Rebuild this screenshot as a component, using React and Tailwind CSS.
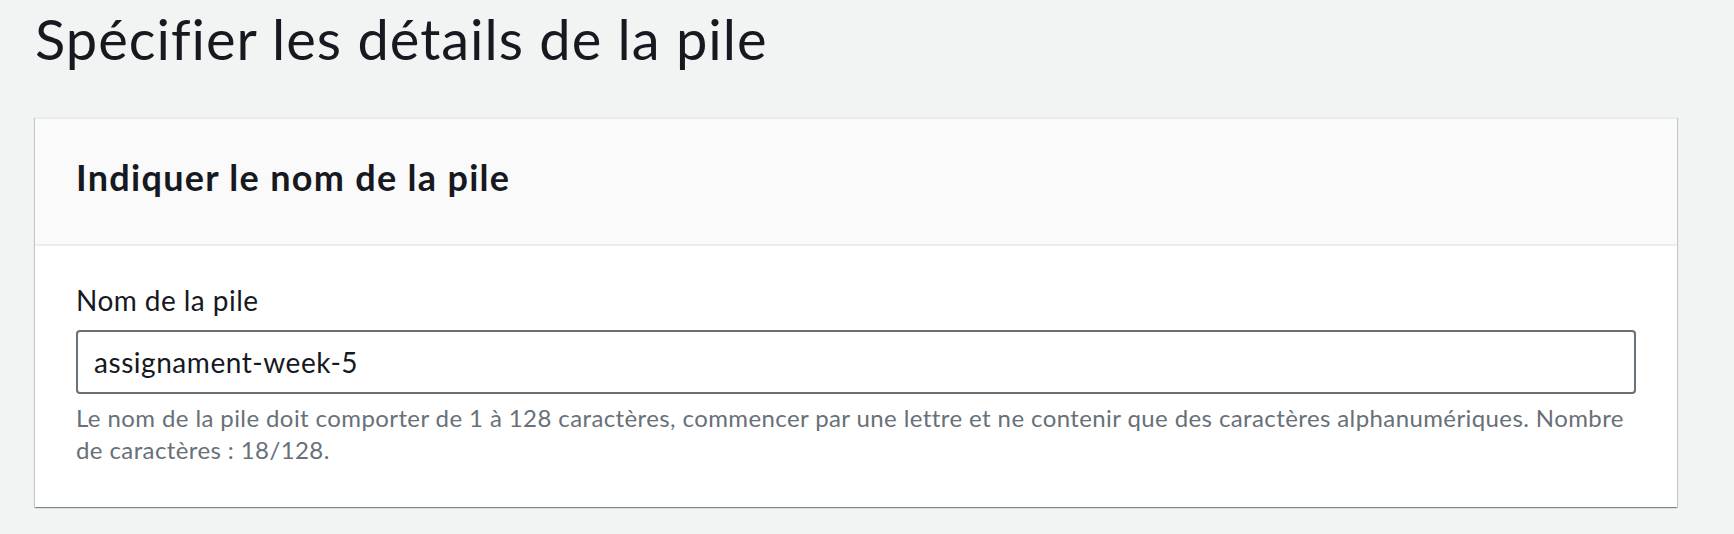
export default function App() {
  return (
    <div className="min-h-[534px] w-full bg-[#f2f3f3] font-['Lato',sans-serif] text-[#16191f] pt-[3px] pb-[26px]">
      <h1 className="pl-[35px] text-[56px] leading-[72px] font-normal tracking-[1px]">Spécifier les détails de la pile</h1>
      <div className="ml-[35px] mt-[42px] w-[1642px] bg-white border-t-2 border-[#eaeded] shadow-[0_1px_1px_0_rgba(0,28,36,0.3),1px_1px_1px_0_rgba(0,28,36,0.15),-1px_1px_1px_0_rgba(0,28,36,0.15)]">
        <div className="bg-[#fafafa] px-[41px] pt-[36px] pb-[45px] border-b-2 border-[#eaeded]">
          <h2 className="text-[36px] leading-[44px] font-bold tracking-[1.3px]">Indiquer le nom de la pile</h2>
        </div>
        <div className="px-[41px] pt-[34px] pb-[41px]">
          <label className="block text-[28px] leading-[40px] tracking-[0.45px]">Nom de la pile</label>
          <div className="mt-[10px] h-[64px] flex items-center border-2 border-[#687078] rounded-[4px] px-[16px] bg-white">
            <span className="text-[28px] leading-[40px] tracking-[0.55px]">assignament-week-5</span>
          </div>
          <p className="mt-[8px] text-[24px] leading-[32px] text-[#687078] tracking-[0.4px]">
            Le nom de la pile doit comporter de 1 à 128 caractères, commencer par une lettre et ne contenir que des caractères alphanumériques. Nombre
            <br />
            de caractères : 18/128.
          </p>
        </div>
      </div>
    </div>
  );
}
